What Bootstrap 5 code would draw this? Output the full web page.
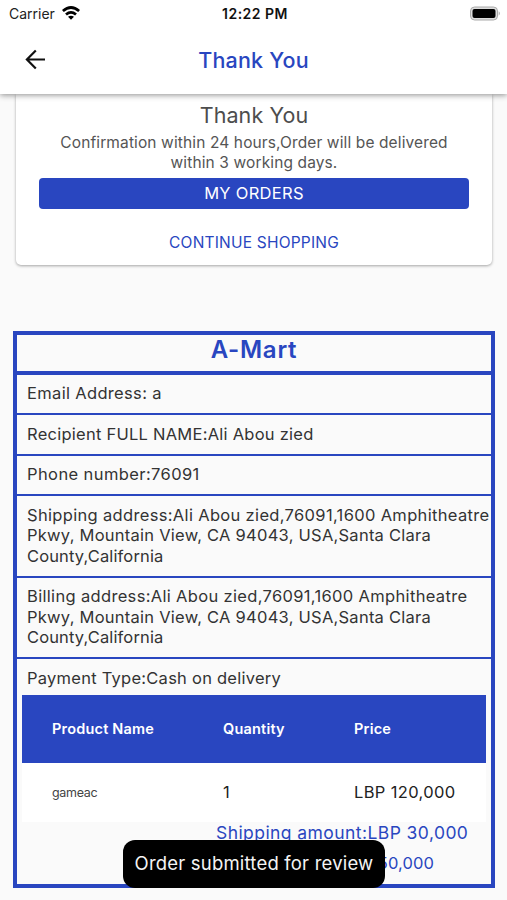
<!DOCTYPE html>
<html lang="en">
<head>
<meta charset="utf-8">
<meta name="viewport" content="width=device-width, initial-scale=1">
<title>Thank You</title>
<link href="https://cdn.jsdelivr.net/npm/bootstrap@5.3.0/dist/css/bootstrap.min.css" rel="stylesheet">
<style>
:root{--brand:#2946c0}
body{font-family:Inter,"Liberation Sans",sans-serif;background:#fafafa;color:#333;height:900px;overflow:hidden}
.brand-text{color:var(--brand)}
.app-header{height:94px;box-shadow:0 1px 6px rgba(0,0,0,.45);position:relative;z-index:2}
.status-bar{height:27px;font-size:14px;color:#222;padding:0 6px 0 9px}
.status-bar>.side{flex:1 1 0}
.clock{font-weight:600;letter-spacing:.5px;color:#111}
.wifi{margin:0 0 2px 7px}
.title-bar{height:66px;padding:0 24px}
.title-bar svg,.title-bar .spacer{width:24px}
.page-title{font-size:21.5px;font-weight:500;letter-spacing:.2px;line-height:1;padding-top:1px}
.thanks{margin:0 15px 0 16px;height:171px;border-radius:0 0 5px 5px;box-shadow:0 1px 3px rgba(0,0,0,.35);padding:7px 23px 0;color:#555}
.thanks h2{font-size:21.5px;line-height:28px;letter-spacing:.1px;font-weight:400;color:#4d4d4d}
.thanks p{font-size:15.5px;line-height:19.5px;letter-spacing:.12px;padding-top:4px;white-space:nowrap}
.btn-orders{background:var(--brand);color:#fff;height:31px;font-size:16.5px;line-height:31px;border-radius:4px;padding:0;border:0;margin-top:6px;letter-spacing:.3px}
.btn-continue{color:var(--brand);font-size:15.5px;line-height:20px;padding:0;border:0;margin-top:24px;letter-spacing:.2px}
.receipt{margin:66px 12px 0 13px;height:557px;border:4px solid var(--brand)}
.receipt h1{height:40px;border-bottom:4px solid var(--brand);font-size:24px;line-height:30px;font-weight:600;letter-spacing:.75px}
.detail{border-bottom:2px solid var(--brand);padding:8.4px 0 9.4px 10px;font-size:16.5px;line-height:20.6px;letter-spacing:.33px;white-space:nowrap}
.detail .snug{letter-spacing:.25px}
.detail .tight{letter-spacing:.14px}
.detail .wide{letter-spacing:.4px}
.products{margin:3px 5px 0}
.products .line{display:grid;grid-template-columns:171px 131px 1fr;align-items:center;padding-left:30px}
.line-head{background:var(--brand);color:#fff;font-weight:600;font-size:14.5px;height:68px;letter-spacing:.2px}
.line-item{background:#fff;height:59px;font-size:16.5px;color:#222;letter-spacing:.35px}
.line-item small{font-size:12.5px;color:#444;letter-spacing:-.3px;padding-top:2px}
.totals{width:252px;margin-left:194px}
.ship{font-size:17.5px;line-height:22px;letter-spacing:.43px;white-space:nowrap}
.total{font-size:16.5px;line-height:22px;letter-spacing:.1px;margin-top:8px;padding-right:34px}
.toast-note{position:absolute;left:123px;top:840px;width:262px;height:48px;border-radius:12px;background:#000;color:#f4f4f4;font-size:18.5px;letter-spacing:.2px;z-index:3;white-space:nowrap}
</style>
</head>
<body>
<header class="app-header bg-white">
  <div class="status-bar d-flex align-items-center">
    <div class="side d-flex align-items-center"><span>Carrier</span>
      <svg class="wifi" width="18" height="14" viewBox="0 0 18 14"><path d="M0 4Q9-3.8 18 4L16.2 6.1Q9-.2 1.8 6.1ZM3.1 7.5Q9 2.6 14.9 7.5L13.1 9.5Q9 6.2 4.9 9.5ZM6 10.8Q9 8.5 12 10.8L9 13.8Z" fill="#000"/></svg>
    </div>
    <div class="clock text-nowrap">12:22 PM</div>
    <div class="side d-flex justify-content-end">
      <svg width="32" height="16" viewBox="0 0 32 16"><rect x="1.5" y="1" width="27" height="13" rx="4" fill="#ddd" stroke="#aaa"/><rect x="3.5" y="3" width="23" height="9" rx="2" fill="#000"/><path d="M29.7 5.3Q32 7.5 29.7 9.7Z" fill="#aaa"/></svg>
    </div>
  </div>
  <div class="title-bar d-flex align-items-center justify-content-between">
    <svg height="24" viewBox="0 0 24 24" fill="none" stroke="#111" stroke-width="2.2"><path d="M21 11.5H3.2M11.8 2.5 2.9 11.5l8.9 9"/></svg>
    <div class="page-title brand-text">Thank You</div>
    <span class="spacer"></span>
  </div>
</header>
<main>
  <section class="thanks bg-white text-center">
    <h2 class="mb-0">Thank You</h2>
    <p class="mb-0">Confirmation within 24 hours,Order will be delivered<br>within 3 working days.</p>
    <button class="btn btn-orders w-100 d-block">MY ORDERS</button>
    <button class="btn btn-continue">CONTINUE SHOPPING</button>
  </section>
  <section class="receipt">
    <h1 class="text-center brand-text mb-0">A-Mart</h1>
    <div class="detail">Email Address: a</div>
    <div class="detail"><span class="snug">Recipient FULL NAME:Ali Abou zied</span></div>
    <div class="detail"><span class="wide">Phone number:76091</span></div>
    <div class="detail">Shipping address:Ali Abou zied,76091,1600 Amphitheatre<br><span class="snug">Pkwy, Mountain View, CA 94043, USA,Santa Clara</span><br><span class="tight">County,California</span></div>
    <div class="detail">Billing address:Ali Abou zied,76091,1600 Amphitheatre<br><span class="snug">Pkwy, Mountain View, CA 94043, USA,Santa Clara</span><br><span class="tight">County,California</span></div>
    <div class="detail border-0 pb-1"><span class="snug">Payment Type:Cash on delivery</span></div>
    <div class="products">
      <div class="line line-head"><span>Product Name</span><span>Quantity</span><span>Price</span></div>
      <div class="line line-item"><small>gameac</small><span>1</span><span>LBP 120,000</span></div>
      <div class="totals brand-text text-end">
        <div class="ship">Shipping amount:LBP 30,000</div>
        <div class="total">Total:LBP 150,000</div>
      </div>
    </div>
  </section>
</main>
<div class="toast-note d-flex align-items-center justify-content-center" role="status">Order submitted for review</div>
<script src="https://cdn.jsdelivr.net/npm/bootstrap@5.3.0/dist/js/bootstrap.bundle.min.js"></script>
</body>
</html>
